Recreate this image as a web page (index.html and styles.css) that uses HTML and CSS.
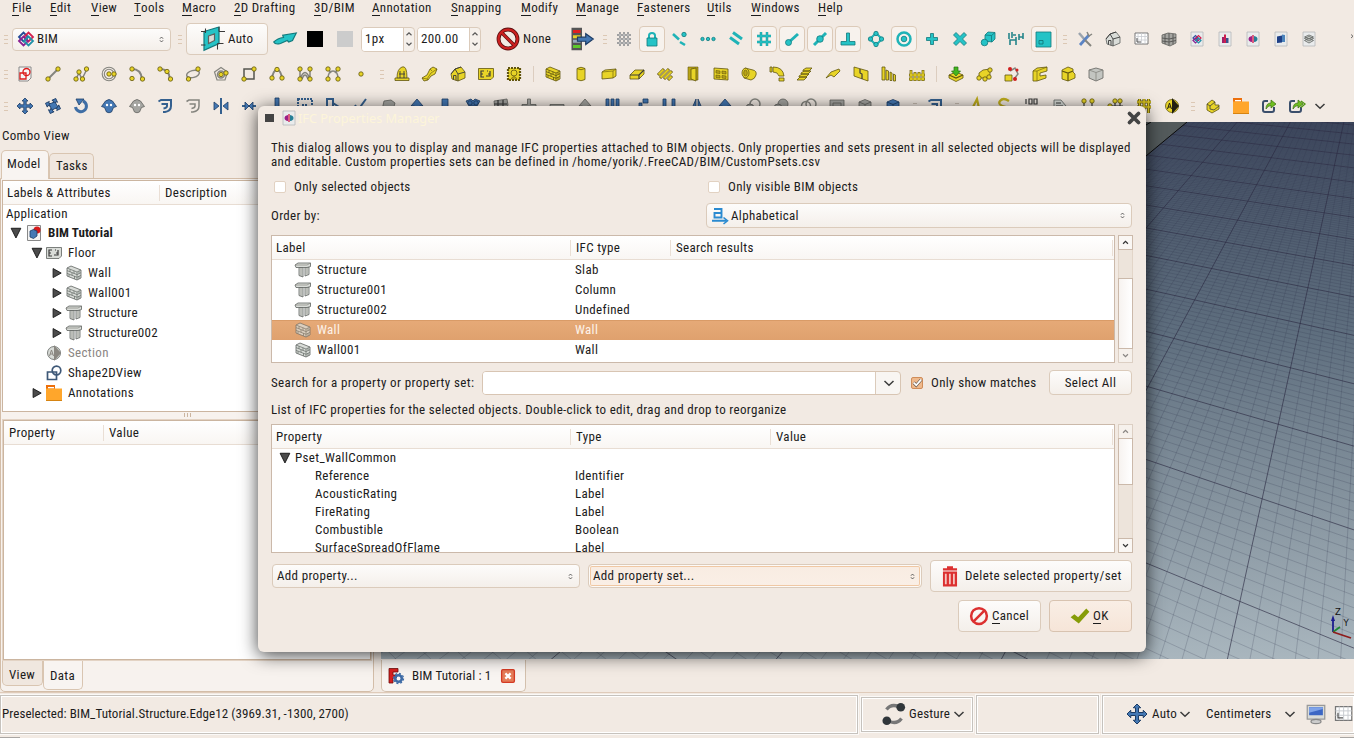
FILE: index.html
```
<!DOCTYPE html>
<html lang="en">
<head>
<meta charset="utf-8">
<title>BIM Tutorial</title>
<link rel="stylesheet" href="styles.css">
</head>
<body>
<div class="app">
  <nav class="menu">
    <span><u>F</u>ile</span><span><u>E</u>dit</span><span><u>V</u>iew</span><span><u>T</u>ools</span><span><u>M</u>acro</span><span><u>2</u>D Drafting</span><span><u>3</u>D/BIM</span><span><u>A</u>nnotation</span><span><u>S</u>napping</span><span><u>M</u>odify</span><span><u>M</u>anage</span><span><u>F</u>asteners</span><span><u>U</u>tils</span><span><u>W</u>indows</span><span><u>H</u>elp</span>
  </nav>

  <div class="bar bar-main">
    <b class="handle"></b>
    <div class="combo workbench"><i data-icon="bim"></i><span>BIM</span><i class="updown" data-icon="updown"></i></div>
    <b class="handle wide"></b>
    <div class="btn plane"><i class="s24" data-icon="plane"></i><span>Auto</span></div>
    <i class="s24 arrow3d" data-icon="arrow3d"></i>
    <b class="swatch black"></b><b class="swatch grey"></b>
    <div class="spin px"><span>1px</span><i data-icon="spin"></i></div>
    <div class="spin mm"><span>200.00</span><i data-icon="spin"></i></div>
    <i class="s24 none" data-icon="none"></i><span class="nonetext">None</span>
    <i class="s24 group" data-icon="group"></i>
    <b class="handle snap"></b>
    <div class="cells" data-cells="grid lock! near ext parallel snapgrid! endpoint! midpoint! perp! angle center! plus cross special dim wp! | tools house sheet windows doc1 doc2 doc3 doc4 doc5"></div>
    <i class="more" data-icon="more"></i>
  </div>
  <div class="bar"><b class="handle"></b><div class="cells" data-cells="sketch line wire circle arc arc3 ellipse polygon rect bspline bezcub bezier point | site building house_y floor_y space / wall column beam slab rebars door window pipe elbow stairs roof panel frame fence / imp equip nest profile compound box"></div></div>
  <div class="bar"><b class="handle"></b><div class="cells" data-cells="move copy rotate clone clone_g offset offset_g trim join split scale stretch draft2 upg_g up_b bar_b array_b array_g plus_g minus_g arrow_g bars_b path_b cols_b mirror arrow_b cut_g union_g common_g cyl_g boxg box_b - offset . text_y string_y dim100 leader axis_y axes_y grid_y section_y | part folder link links"></div><i class="chev" data-icon="chevron"></i></div>

  <main class="work">
    <aside class="dock">
      <h1>Combo View</h1>
      <div class="tabs"><span class="tab on">Model</span><span class="tab">Tasks</span></div>
      <div class="dockbody">
        <section class="tree">
          <header><span>Labels &amp; Attributes</span><span>Description</span></header>
          <div class="root">Application</div>
          <div class="node l0 bold"><i data-icon="open"></i><i data-icon="docred"></i>BIM Tutorial</div>
          <div class="node l1"><i data-icon="open"></i><i data-icon="floor"></i>Floor</div>
          <div class="node l2"><i data-icon="closed"></i><i data-icon="wall_g"></i>Wall</div>
          <div class="node l2"><i data-icon="closed"></i><i data-icon="wall_g"></i>Wall001</div>
          <div class="node l2"><i data-icon="closed"></i><i data-icon="struct"></i>Structure</div>
          <div class="node l2"><i data-icon="closed"></i><i data-icon="struct"></i>Structure002</div>
          <div class="node l1 dim"><i></i><i data-icon="section_g"></i>Section</div>
          <div class="node l1"><i></i><i data-icon="shape2d"></i>Shape2DView</div>
          <div class="node l1"><i data-icon="closed"></i><i data-icon="folder"></i>Annotations</div>
        </section>
        <div class="split"><b></b><b></b><b></b></div>
        <section class="props"><header><span>Property</span><span>Value</span></header></section>
        <div class="tabs bottom"><span class="tab">View</span><span class="tab on">Data</span></div>
      </div>
    </aside>
    <section class="mdi">
      <div class="view"><svg id="scene" viewBox="381 122 973 537" width="973" height="537"></svg></div>
      <div class="doctab"><i data-icon="freecad"></i><span>BIM Tutorial : 1</span><i class="x" data-icon="closetab"></i></div>
    </section>
  </main>

  <footer class="status">
    <div class="cell msg">Preselected: BIM_Tutorial.Structure.Edge12 (3969.31, -1300, 2700)</div>
    <div class="cell gesture"><i class="s24" data-icon="gesture"></i><span>Gesture</span><i data-icon="chevron"></i></div>
    <div class="cell"></div>
    <div class="cell units"><i class="s20" data-icon="move"></i><span>Auto</span><i data-icon="chevron"></i><span class="cm">Centimeters</span><i data-icon="chevron"></i><i class="s20 scr" data-icon="screen"></i><i class="s20" data-icon="sheet"></i></div>
  </footer>
  <b class="edge left"></b><b class="edge right"></b>
</div>

<div class="dialog">
  <div class="title"><b class="sq"></b><i data-icon="doc3"></i><span>IFC Properties Manager</span><i class="close" data-icon="close"></i></div>
  <p class="intro">This dialog allows you to display and manage IFC properties attached to BIM objects. Only properties and sets present in all selected objects will be displayed<br>and editable. Custom properties sets can be defined in /home/yorik/.FreeCAD/BIM/CustomPsets.csv</p>
  <div class="checks"><label><b class="check"></b>Only selected objects</label><label><b class="check"></b>Only visible BIM objects</label></div>
  <div class="order"><span>Order by:</span><div class="combo"><i data-icon="alpha"></i><span>Alphabetical</span><i class="updown" data-icon="updown"></i></div></div>
  <div class="listrow first">
    <div class="table">
      <header><span>Label</span><span>IFC type</span><span>Search results</span></header>
      <div class="row"><span><i data-icon="struct"></i>Structure</span><span>Slab</span></div>
      <div class="row"><span><i data-icon="struct"></i>Structure001</span><span>Column</span></div>
      <div class="row"><span><i data-icon="struct"></i>Structure002</span><span>Undefined</span></div>
      <div class="row sel"><span><i data-icon="wall_s"></i>Wall</span><span>Wall</span></div>
      <div class="row"><span><i data-icon="wall_g"></i>Wall001</span><span>Wall</span></div>
    </div>
    <div class="scroll"><i data-icon="sup"></i><b class="trough"></b><b class="thumb"></b><i class="off" data-icon="sdown"></i></div>
  </div>
  <div class="search"><span class="lbl">Search for a property or property set:</span><div class="field"><b></b><i data-icon="chevron"></i></div><label><b class="check on"><i data-icon="tick"></i></b>Only show matches</label><div class="btn">Select All</div></div>
  <div class="hint">List of IFC properties for the selected objects. Double-click to edit, drag and drop to reorganize</div>
  <div class="listrow second">
    <div class="table small">
      <header><span>Property</span><span>Type</span><span>Value</span></header>
      <div class="row set"><span><i data-icon="open"></i>Pset_WallCommon</span></div>
      <div class="row"><span>Reference</span><span>Identifier</span></div>
      <div class="row"><span>AcousticRating</span><span>Label</span></div>
      <div class="row"><span>FireRating</span><span>Label</span></div>
      <div class="row"><span>Combustible</span><span>Boolean</span></div>
      <div class="row"><span>SurfaceSpreadOfFlame</span><span>Label</span></div>
    </div>
    <div class="scroll"><i class="off" data-icon="sup"></i><b class="thumb"></b><b class="trough"></b><i data-icon="sdown"></i></div>
  </div>
  <div class="add">
    <div class="combo"><span>Add property...</span><i class="updown" data-icon="updown"></i></div>
    <div class="combo focus"><span>Add property set...</span><i class="updown" data-icon="updown"></i></div>
    <div class="btn del"><i class="s24" data-icon="trash"></i><span>Delete selected property/set</span></div>
  </div>
  <div class="actions">
    <div class="btn"><i class="s20" data-icon="cancel"></i><span><u>C</u>ancel</span></div>
    <div class="btn default"><i class="s20" data-icon="ok"></i><span><u>O</u>K</span></div>
  </div>
</div>
<script src="app.js"></script>
</body>
</html>
```

FILE: styles.css
```
* { box-sizing: border-box; }
body {
  margin: 0; width: 1354px; height: 738px; overflow: hidden; position: relative;
  background: #f2eae3; color: #1c1c1c;
  font: 13px/16px Roboto, "Open Sans", sans-serif; font-stretch: 75%; letter-spacing: .33px;
  white-space: nowrap;
}
i, b { display: block; font-style: normal; flex: none; }
i { width: 16px; height: 16px; }
i svg { display: block; width: 100%; height: 100%; overflow: visible; }
.s20 { width: 20px; height: 20px; }
.s24 { width: 24px; height: 24px; }
u { text-decoration: none; box-shadow: 0 -1px 0 #1c1c1c inset; display: inline-block; line-height: 15px; height: 16px; }

/* icon palettes */
.y { fill: #e8d427; stroke: #61550f; stroke-width: .8; }
.yd { fill: #b9a416; stroke: #61550f; stroke-width: .6; }
.t { fill: #25c3c6; stroke: #12797c; stroke-width: .8; }
.tl { fill: none; stroke: #1fb3b7; stroke-width: 2; }
.bl { fill: #4478b4; stroke: #1d3c64; stroke-width: .8; }
.bn { fill: none; stroke: #34608f; stroke-width: 2; }
.g { fill: #a5a5a1; stroke: #62625e; stroke-width: .8; }
.gn { fill: none; stroke: #85857f; stroke-width: 1.5; }
.w { fill: #d9dcd8; stroke: #5e625f; stroke-width: .8; }
.k { fill: none; stroke: #3a3a3a; stroke-width: 1.2; }

.app { display: grid; grid-template-rows: 20px 38px 32px 32px 570px 46px; height: 738px; }
.menu { display: grid; padding-left: 12px; grid-template-columns: 38px 41px 43px 48px 52px 80px 58px 79px 70px 55px 61px 70px 44px 67px 60px; }
.menu span { height: 16px; }
.bar { display: flex; align-items: center; }
.handle { width: 11px; height: 9px; background: repeating-linear-gradient(#dcc8b4 0 1px, transparent 1px 4px) 4px 0 / 4px 9px no-repeat; }
.cells { display: flex; align-items: center; }
.cell16 { width: 28px; height: 28px; padding: 6px; }
.cell16.on { width: 26px; height: 26px; margin: 0 1px; padding: 4px; border: 1px solid #dccab8; border-radius: 4px; background: #f7f2ed; }
.gap { width: 12.5px; height: 9px; background: repeating-linear-gradient(#dcc8b4 0 1px, transparent 1px 4px) 5px 0 / 4px 9px no-repeat; }
.sep { width: 11px; height: 16px; background: linear-gradient(#dccdbf, #dccdbf) 5px 0 / 1px 16px no-repeat; }
.dash { width: 13.5px; height: 6px; background: linear-gradient(#c9bdb2, #c9bdb2) 6px 0 / 4px 1px no-repeat; }

.combo, .btn { display: flex; align-items: center; border: 1px solid #dbcbbb; border-radius: 4px; background: linear-gradient(#fdfcfb, #f4efea); }
.combo .updown { margin-left: auto; width: 5px; height: 7px; }
.workbench { width: 159px; height: 23px; margin-left: 1px; padding: 0 6px 0 5px; gap: 3px; }
.wide { margin-left: 3px; }
.plane { width: 82px; height: 32px; margin-left: 1px; padding-left: 14px; gap: 3px; }
.arrow3d { margin-left: 5px; }
.swatch { width: 16px; height: 16px; margin-left: 10px; }
.swatch.grey { margin-left: 14px; }
.black { background: #000; }
.swatch.grey { background: #ccc; }
.spin { display: flex; height: 25px; border: 1px solid #dbcbbb; border-radius: 4px; background: #f5f0eb; margin-left: 8px; }
.spin span { background: #fff; border-right: 1px solid #dbcbbb; border-radius: 3px 0 0 3px; padding: 3px 0 0 3px; flex: 1; }
.spin i { width: 10px; height: 22px; }
.px { width: 54px; }
.mm { width: 64px; margin-left: 2px; }
.none { margin-left: 15px; }
.nonetext { width: 47px; margin-left: 3px; }
.handle.snap { margin-left: 5px; }
.more { margin: 0 -2px 6px auto; width: 8px; }
.chev { margin-left: 1px; }

.work { display: grid; grid-template-columns: 375px 973px; column-gap: 6px; }
.dock h1 { margin: 0; font: inherit; padding: 6px 0 0 2px; height: 28px; }
.tabs { display: flex; align-items: flex-end; padding-left: 1px; height: 28px; }
.tab { border: 1px solid #d9c5b1; border-bottom: 0; border-radius: 5px 5px 0 0; padding: 4px 6px 0; height: 25px; width: 45px; background: #f0e7df; }
.tab.on { height: 29px; width: 48px; padding: 5px 5px 0; background: #f8f4f1; margin-bottom: -1px; position: relative; }
.dockbody { height: 514px; border: 1px solid #d3bda8; border-radius: 0 0 5px 5px; background: #f7f2ee; padding: 1px 1px 0; margin-right: 1px; }
.tree { background: #fff; border: 1px solid #cbb5a0; height: 232px; }
.tree header, .props header, .table header { display: grid; height: 24px; align-items: center; background: linear-gradient(#fff, #f9f6f3); border-bottom: 1px solid #e8ddd3; }
.tree header { grid-template-columns: 152px 1fr; padding-left: 4px; }
header span + span { border-left: 1px solid #eadfd5; padding-left: 5px; }
.root { padding-left: 3px; line-height: 18px; height: 18px; }
.node { display: flex; align-items: center; height: 20px; gap: 4px; }
.node i:first-child { width: 12px; height: 14px; }
.l0 { padding-left: 7px; }
.l1 { padding-left: 27.5px; gap: 3px; }
.l2 { padding-left: 47.5px; gap: 3px; }
.l0 i + i { margin-right: 2px; }
.l1 i + i, .l2 i + i { margin: 0 3px 0 .5px; }
.bold { font-weight: bold; letter-spacing: .1px; }
.dim { color: #8b8683; }
.split { height: 7px; display: flex; justify-content: center; gap: 2px; padding-top: 1px; }
.split b { width: 1px; height: 4px; background: #cbb5a0; }
.props { background: #fff; border: 1px solid #cbb5a0; outline: 1px solid #e3d3c4; height: 240px; margin: 1px 1px 0; }
.props header { grid-template-columns: 94px 1fr; padding-left: 5px; }
.bottom { align-items: flex-start; height: 30px; margin-top: 1px; padding: 0; }
.bottom .tab { border: 1px solid #d9c5b1; border-top: 0; border-radius: 0 0 5px 5px; height: 25px; width: 41px; padding: 6px 6px; }
.bottom .tab.on { height: 29px; width: 40px; padding: 7px 6px; margin: 0; }
.view { height: 537px; background: linear-gradient(#414c61, #5f6f7f 40%, #8795a0 72%, #a9b6be); overflow: hidden; }
#scene { display: block; letter-spacing: 0; font-family: "DejaVu Sans", sans-serif; }
.doctab { display: flex; align-items: center; width: 145px; height: 32px; border: 1px solid #d3c0ad; border-top: 0; border-radius: 0 0 5px 5px; background: #f8f4f1; padding-left: 6px; margin-top: 1px; letter-spacing: .13px; }
.doctab span { margin-left: 8px; width: 89px; }
.doctab .x { width: 14px; height: 14px; }

.status { display: grid; grid-template-columns: 858px 112px 123px 253px; column-gap: 3px; border-top: 1px solid #dfcbba; padding-top: 1px; height: 42px; align-items: center; }
.cell { display: flex; align-items: center; height: 39px; border: 1px solid #c6c2bd; box-shadow: 0 0 0 1px #fff inset, 0 0 0 1px #fbf9f7; padding-left: 1px; }
.msg { letter-spacing: .08px; }
.gesture { height: 35px; padding-left: 20px; gap: 3px; }
.gesture span { margin-right: -2px; letter-spacing: .2px; }
.units { padding-left: 24px; letter-spacing: .3px; }
.units span { margin-left: 5px; width: 25px; }
.units .cm { width: 70px; margin: 0 6px 0 13px; }
.units .scr { margin: 0 7px 0 8px; }
.edge { position: absolute; height: 1px; bottom: 0; background: #a9a6a3; }
.edge.left { left: 0; width: 20px; }
.edge.right { right: 0; width: 14px; }

.dialog { position: absolute; left: 258px; top: 106px; width: 888px; height: 546px; padding: 4px 14px 0 13px; background: #f2eae3; border-radius: 6px; box-shadow: 0 3px 18px rgba(0, 0, 0, .75); }
.title { display: flex; align-items: center; height: 16px; margin: 0 -10px 0 -6px; font: 12.75px/16px "Noto Sans", sans-serif; letter-spacing: 0; color: #fdf5da; }
.sq { width: 9px; height: 8px; background: #444; margin-right: 7px; }
.title span { margin-left: 1px; }
.close { margin-left: auto; }
.intro { margin: 15px 0 0; height: 33px; line-height: 14px; }
.checks { display: grid; grid-template-columns: 434px 1fr; height: 26px; }
label { display: flex; align-items: center; height: 26px; gap: 8px; }
.checks label { padding-left: 3px; }
.check { width: 12px; height: 12px; border: 1px solid #e2d2c2; border-radius: 2px; background: #fff; }
.order { display: grid; grid-template-columns: 435px 426px; height: 35px; padding-top: 3px; }
.order .combo { height: 25px; padding: 0 6px 0 5px; gap: 3px; }
.order > span { padding-top: 5px; }
.listrow { display: flex; gap: 3px; }
.listrow > div { flex: none; }
.first { height: 128px; }
.second { height: 129px; }
.table { width: 844px; background: #fff; border: 1px solid #cbb9aa; overflow: hidden; }
.table header { grid-template-columns: 294px 100px 442px 1fr; padding-left: 4px; }
.table header::after { content: ""; border-left: 1px solid #eadfd5; height: 16px; }
.table.small header { grid-template-columns: 294px 200px 342px 1fr; }
.row { display: grid; grid-template-columns: 303px 1fr; height: 20px; align-items: center; }
.row span:first-child { display: flex; align-items: center; gap: 6px; padding-left: 23px; }
.row.sel { background: linear-gradient(#e6aa78, #dfa16e); color: #fdf3ea; box-shadow: 0 1px 0 #d99b67 inset; }
.small .row { height: 18px; }
.small .row span:first-child { padding-left: 43px; }
.small .row.set span:first-child { padding-left: 7px; gap: 4px; }
.set i { width: 12px; height: 14px; }
.scroll { width: 15px; display: flex; flex-direction: column; }
.scroll i { height: 15px; width: 15px; border: 1px solid #cbb9aa; background: #faf7f4; }
.scroll i.off { opacity: .55; }
.trough { flex: 1; background: #ede4db; border: 1px solid #e2d5c8; border-width: 0 1px; }
.thumb { position: relative; height: 71px; background: linear-gradient(90deg, #f7f3f0, #fff); border: 1px solid #cbb9aa; margin: -1px 0; }
.second .thumb { height: 47px; }
.search { display: flex; align-items: center; height: 39px; }
.lbl { width: 211px; letter-spacing: .38px; }
.field { width: 419px; height: 24px; display: flex; border: 1px solid #d8c5b3; border-radius: 4px; background: #f8f5f2; align-items: center; }
.field b { width: 393px; height: 22px; background: #fff; border-right: 1px solid #dbcbbb; border-radius: 3px 0 0 3px; }
.field i { margin-left: 5px; }
.search label { margin-left: 10px; width: 138px; }
.check.on { background: #efb98c; border-color: #d08d5a; }
.check.on i { width: 12px; height: 12px; margin: -1px; }
.search .btn { width: 83px; height: 25px; justify-content: center; }
.hint { height: 22px; }
.add { display: flex; margin-top: 7px; height: 32px; align-items: center; padding-left: 1px; gap: 8px; }
.add .combo { width: 308px; height: 24px; padding: 0 6px 0 4px; }
.add .combo.focus { width: 334px; background: linear-gradient(#f8ece2, #faefe6); box-shadow: 0 0 0 1px #fdfaf7 inset, 0 0 0 2px #f0c8a4 inset; }
.del { width: 202px; height: 32px; padding-left: 7px; gap: 3px; letter-spacing: .4px; }
.actions { display: flex; justify-content: flex-end; gap: 8px; margin-top: 8px; }
.actions .btn { width: 83px; height: 32px; padding-left: 10px; gap: 3px; }
.actions .default { background: linear-gradient(#f9eee5, #f6e5d8); border-color: #d8c3b0; padding-left: 20px; }
```

FILE: app.js
```
const dot = (x, y, c = 'y') => `<circle class="${c}" cx="${x}" cy="${y}" r="2.2"/>`;
const P = (d, c, x = '') => `<path class="${c}" d="${d}" ${x}/>`;
const page = s => `<path d="M2 1H14V15H2Z" fill="#e9ebec" stroke="#b5b8ba" stroke-width=".8"/>${s}`;
const bricks = (c, k) => P('M1 3 5 1 15 5V13L11 15 1 11Z', c) + P('M1 5.6 11 9.6 15 7.6M1 8.3 11 12.3 15 10.3M1 3 11 7 15 5M11 7V15M4 4.3V7M8 5.8V8.5M6 7.6V10.3M3 9.2V11.6M8.5 11V14M13 6V8.5M13 11V14', 'k', `style="stroke-width:.8;stroke:${k}"`);
const cube = c => P('M2 4 8 1.5 14 4V12L8 15 2 12Z', c) + P('M2 4 8 6.5 14 4M8 6.5V15', c, 'style="fill:none"');
const houses = c => P('M1 8 5 3 11 1 15 6V12L8 15 2 13Z', c) + P('M1 8 5 3 8 8V15M5 3 11 1M8 8 15 6M3.5 13.5V9.5H6V14.4', 'k', 'style="stroke-width:.9"');
const floor = c => P('M.5 2.5H15.5V11L13 13.5H.5Z', c) + P('M6 5H3V11H6M3 8H5M8 10H12V5M9 5H10M12 8H10', 'k');
const move = c => P('M8 0 11 3H9.2V6.8H13V5L16 8 13 11V9.2H9.2V13H11L8 16 5 13H6.8V9.2H3V11L0 8 3 5V6.8H6.8V3H5Z', c);
const sheep = c => P('M4.500 3Q8 0 11.500 3L15.500 8.500 12.500 9.500 10.500 14Q8 15.500 5.500 14L3.500 9.500 .5 8.500Z', c) + '<circle cx="6" cy="7" r="1.2" fill="#fff"/><circle cx="10" cy="7" r="1.2" fill="#fff"/>';
const off = c => P('M1.500 3.500 4 2H14V8Q14 13 8 14H6M4.500 6H10V8Q10 10 6.500 10.500', c);
const arr = c => P('M8 1 14 8H10.500V15H5.500V8H2Z', c);
const col3 = (c, xs) => xs.map(x => P(`M${x} 1H${x + 3}V15H${x}Z`, c)).join('');
const gridLines = 'M1 4H15M1 9H15M3.500 1V12M8 1V15M12.500 1V15';
const sect = (c, f) => `<circle class="${c}" cx="8" cy="8" r="6.500"/><path d="M8 0V16L15 8Z" fill="${f}"/><path d="M3.500 11 5.500 5 7.500 11M4 9H7" fill="none" stroke="${f}"/>`;

const icons = {
  bim: '<g fill="none" stroke-width="1.800"><path d="M1 6 5.500 1.500 10 6 5.500 10.500Z" stroke="#244b97"/><path d="M6 6 10.500 1.500 15 6 10.500 10.500Z" stroke="#d4214f"/><path d="M1 10 5.500 5.500 10 10 5.500 14.500Z" stroke="#8b2191"/><path d="M6 10 10.500 5.500 15 10 10.500 14.500Z" stroke="#2191a8"/></g>',
  updown: '<path d="M3 5.500 8 0 13 5.500M3 10.500 8 16 13 10.500" fill="none" stroke="#444" stroke-width="2.600"/>',
  plane: P('M2 3 12 0V11L2 15.500Z', 't') + P('M0 3H3M12 3H16M0 12H3M11 11H15M3 1V4M12 0V3M11 11V15', 'k', 'style="stroke-width:.7"') + P('M5 6 9 4.600V9L5 11Z', 'w'),
  arrow3d: P('M.5 10Q3 7.500 7 7L6.500 5.500 15.500 4 13 9 10.500 10 9.500 9 5 11Q1.500 12 .5 10Z', 't'),
  spin: '<g fill="none" stroke="#555" stroke-width="1.800"><path d="M4 2 8-2 12 2M4 14 8 18 12 14"/></g>',
  none: '<circle cx="8" cy="8" r="6.300" fill="none" stroke="#5b1010" stroke-width="2.600"/><path d="M3.500 3.500 12.500 12.500" stroke="#5b1010" stroke-width="2.400"/><g fill="none" stroke="#cc2020" stroke-width="1.500"><circle cx="8" cy="8" r="6.300"/><path d="M3.500 3.500 12.500 12.500"/></g>',
  group: '<path d="M1 .5H8V15.500H1Z" fill="#555"/><path d="M2 2H7V4H2Z" fill="#e01f1f"/><path d="M2 5.500H7V7.500H2Z" fill="#e6d227"/><path d="M2 8.500H7V10.500H2Z" fill="#9ab"/><path d="M2 12H7V14H2Z" fill="#5ec92c"/>' + P('M5 6.800H10.500V4.500L15.500 8 10.500 11.700V9.500H5Z', 'bl'),
  grid: '<path d="M1 4H15M1 8H15M1 12H15M4 1V15M8 1V15M12 1V15" stroke="#77787a" stroke-width="2"/><path d="M1 4H15M1 8H15M1 12H15M4 1V15M8 1V15M12 1V15" stroke="#dfe0e0" stroke-width=".8"/>',
  lock: P('M5 7V4.500Q5 2 8 2T11 4.500V7', 'tl') + P('M3 7H13V15H3Z', 't'),
  near: dot(12, 3.5, 't') + P('M1 3 7 8.500M8 11 13 14', 'tl', 'style="stroke-width:2.600"'),
  ext: [2.5, 8, 13.5].map(x => `<circle class="t" cx="${x}" cy="8" r="1.700"/>`).join(''),
  parallel: P('M5 1.500 14 8M2 6.500 11 13', 'tl', 'style="stroke-width:3"'),
  snapgrid: P('M5 1V15M11 1V15M1 5H15M1 11H15', 'tl', 'style="stroke:#178a8e;stroke-width:2.400"') + P('M5 1V15M11 1V15M1 5H15M1 11H15', 'tl', 'style="stroke-width:1.400;stroke:#25c3c6"'),
  endpoint: P('M4 12 14 3', 'tl', 'style="stroke-width:3"') + '<circle class="t" cx="4.500" cy="11.500" r="3"/>',
  midpoint: P('M2 14 14 2', 'tl', 'style="stroke-width:3"') + '<circle class="t" cx="8" cy="8" r="3.300"/>',
  perp: P('M6.500 2H9.500V10.500H15V14H1V10.500H6.500Z', 't'),
  angle: P('M8 2 14 8 8 14 2 8Z', 'tl') + dot(8, 2.5, 't') + dot(13.5, 8, 't') + dot(8, 13.5, 't') + dot(2.5, 8, 't'),
  center: '<circle class="tl" cx="8" cy="8" r="6.500" style="stroke-width:2.500"/><circle class="t" cx="8" cy="8" r="2.800"/>',
  plus: P('M6.500 2.500H9.500V6.500H13.500V9.500H9.500V13.500H6.500V9.500H2.500V6.500H6.500Z', 't'),
  cross: P('M4 1.500 8 5.500 12 1.500 14.500 4 10.500 8 14.500 12 12 14.500 8 10.500 4 14.500 1.500 12 5.500 8 1.500 4Z', 't'),
  special: P('M5 4 8 1 15 1.500V8L12 11 5 10Z', 't') + P('M5 4 11.500 4.500 15 1.500M11.500 4.500V11', 't', 'style="fill:none"') + '<circle class="t" cx="4.500" cy="11.500" r="3.300"/>',
  dim: P('M1 2V8M4 1V7M5 4H8M2 14V9H8M8 6V14M11 3V9M15 2V8M11 6H15', 'tl', 'style="stroke-width:1.600;stroke:#25858a"'),
  wp: P('M0 1H15V16H0Z', 't') + P('M3 9.500H7V13H3Z', 'k', 'style="stroke:#12797c;stroke-width:.9"'),
  tools: P('M2 2 8 9', 'gn', 'style="stroke-width:2.500;stroke:#9aa3ad"') + P('M12 4 3 14', 'bn', 'style="stroke:#5b84c4;stroke-width:2.800"') + P('M8 9 14 15', 'gn', 'style="stroke-width:2"') + P('M10 1 12 5 15 3', 'gn'),
  house: houses('w'), house_y: houses('y'),
  sheet: '<path d="M2 2H15V13H2Z" fill="#fff" stroke="#777"/><path d="M5 2V13M8.500 2V13M12 2V13M2 5.500H15M2 9H15" stroke="#c9ccd0" stroke-width=".8"/><path d="M4 7V11H8" fill="none" stroke="#555"/>',
  windows: P('M1 4 7 2 15 3V12L9 15 1 12Z', 'g') + P('M4 3V13M8 2V14.500M12 3V13.500M1 7 8 8 15 6.500M1 10 8 11 15 9.500', 'k', 'style="stroke:#5a5a58;stroke-width:1"'),
  doc1: page('<g fill="none" stroke-width="1.200"><path d="M4 7 6.500 4.500 9 7 6.500 9.500Z" stroke="#34519f"/><path d="M7 7 9.500 4.500 12 7 9.500 9.500Z" stroke="#d4214f"/><path d="M4 9.500 6.500 7 9 9.500 6.500 12Z" stroke="#8b2191"/><path d="M7 9.500 9.500 7 12 9.500 9.500 12Z" stroke="#2191a8"/></g>'),
  doc2: page('<path d="M5 6H7V12H5Z" fill="#a02068"/><path d="M7 3.500H9V12H7Z" fill="#cc1f4f"/><path d="M9 7H11.500V12H9Z" fill="#39518d"/>'),
  doc3: page('<path d="M7 5V11Q3.500 10.500 3.500 8T7 5Z" fill="#9c1d86"/><path d="M9 5V11Q12.500 10.500 12.500 8T9 5Z" fill="#267f96"/><path d="M7.300 4H8.700V12H7.300Z" fill="#d4214f"/>'),
  doc4: page('<path d="M4 5.500 9 4.500V11.500L4 12Z" fill="#1e3f86"/><path d="M9 3.500 12 4V11H9Z" fill="#4b83bb"/>'),
  doc5: page(P('M3.500 9.500 8 7.500 12.500 9.500 8 12ZM3.500 7.500 8 5.500 12.500 7.500 8 10ZM3.500 6 8 4 12.500 6 8 8Z', 'w')),
  more: '<path d="M4 5 8 8.500 4 12" fill="none" stroke="#444" stroke-width="1.500"/>',
  sketch: '<path d="M2 1H14V12L11 15H2Z" fill="#f6f6f6" stroke="#888"/><g fill="none" stroke="#dc1c1c" stroke-width="1.300"><circle cx="9.500" cy="6" r="3.500"/><path d="M3 7H9V13H3Z"/></g>',
  line: P('M3 13 13 3', 'gn', 'style="stroke-width:2"') + dot(3, 13) + dot(13, 3),
  wire: P('M3 13 6 7 9 13 14 3', 'gn') + dot(3, 13) + dot(6, 6) + dot(9.5, 13) + dot(13.5, 3),
  circle: '<circle class="gn" cx="8" cy="8" r="6.800" style="stroke-width:1.100"/><circle class="gn" cx="8" cy="8" r="4.700" style="stroke-width:1.100"/>' + dot(8, 8) + dot(13, 8),
  arc: P('M3 3Q12 3 13 13', 'gn', 'style="stroke-width:2"') + dot(3, 3) + dot(3, 12.5) + dot(13.5, 13),
  arc3: P('M3 3Q12 3 13 13', 'gn', 'style="stroke-width:2"') + dot(3, 3) + dot(10, 5.5) + dot(13.5, 13),
  ellipse: '<ellipse class="gn" cx="8" cy="8" rx="6.500" ry="3.500" transform="rotate(-15 8 8)"/>' + dot(3.500, 13) + dot(13, 3),
  polygon: P('M8 1.500 14.500 6 12 14H4L1.500 6Z', 'gn', 'style="stroke-width:1.200"') + '<circle class="gn" cx="8" cy="8.500" r="3.500"/>' + dot(8, 8.5) + dot(13, 7),
  rect: P('M3 3H13V13H3Z', 'gn', 'style="stroke:#55554f"') + dot(3, 13) + dot(13, 3),
  bspline: P('M3 13Q4 4 8 4T13 13', 'gn', 'style="stroke-width:2"') + dot(3, 12) + dot(8, 3.5) + dot(13, 12),
  bezcub: P('M3 13V3H5M13 13V3H11M3 13Q8 0 13 13M5 13Q8 5 11 13', 'gn') + dot(3, 13) + dot(13, 13) + dot(3, 3) + dot(13, 3),
  bezier: P('M3 13Q3 5 8 5T13 13M3 3 6 7M13 3 10 7', 'gn') + dot(3, 13) + dot(13, 13) + dot(3, 3) + dot(13, 3),
  point: dot(8, 8),
  site: P('M3 12Q3 3 8 1T13 12H15V14.500H1V12Z', 'y') + P('M6 12V5M10 12V5M3 12H13M5 8H11', 'k', 'style="stroke-width:.9"'),
  building: P('M0 12 5 9 8 3 11 1 15 3 13 8 9 10 6 14 2 15Z', 'y') + P('M0 12 5 13 9 7 15 3M5 13 6 14M8 3 10 5', 'yd', 'style="fill:none"'),
  floor_y: floor('y'), floor: floor('w'),
  space: P('M2 2H14V14H2Z', 'y', 'style="stroke-dasharray:2 1;stroke-width:2.200"') + '<circle class="y" cx="8" cy="7" r="3"/>' + P('M5 13Q8 8 11 13', 'yd'),
  wall: bricks('y', '#61550f'), wall_g: bricks('w', '#707672'), wall_s: `<g opacity=".75">${bricks('w', '#707672')}</g>`,
  column: P('M4 2.500Q8 0 12 2.500V13.500Q8 16 4 13.500Z', 'y') + P('M4 2.500Q8 5 12 2.500', 'y'),
  beam: P('M1 6 4 4 15 3V10L12 12 1 13Z', 'y') + P('M1 6 12 5 15 3M12 5V12', 'yd', 'style="fill:none"'),
  slab: P('M1 9 6 4H15V8L10 13H1Z', 'y') + P('M1 9H10L15 4M10 9V13', 'k'),
  rebars: P('M1 9 7 3M3 12 12 3M7 13 15 5M11 14 15 10', 'yd', 'style="stroke:#61550f;stroke-width:3"') + P('M1.500 8.500 6.500 3.500M3.500 11.500 11.500 3.500M7.500 12.500 14.500 5.500M11.500 13.500 14.500 10.500', 'yd', 'style="stroke:#e2ce25;stroke-width:1.800"'),
  door: P('M3 1H13V14H3Z', 'yd') + P('M6 3 11 2V15L6 13Z', 'y'),
  window: P('M1 2 15 3V14L1 13Z', 'y') + P('M3 4.500 7 5V7.500L3 7ZM9 5 13 5.500V8L9 7.500ZM3 9 7 9.500V12L3 11.500ZM9 9.500 13 10V12.500L9 12Z', 'yd'),
  pipe: P('M4 2 12 4Q16 5 15 9T10 14L3 12Z', 'y') + '<ellipse class="y" cx="4.500" cy="7" rx="3.500" ry="4.800"/><ellipse class="yd" cx="4.500" cy="7" rx="1.800" ry="3"/>',
  elbow: P('M4 1Q14 1 15 10H10Q9 6 4 6ZM1 1H3V6H1ZM10 12H15V15H10Z', 'y'),
  stairs: P('M6 4 9 2H15L12 5H6ZM4 7 7 5H14L11 8H4ZM2 10 5 8H12L9 11H2ZM0 14 3 11H10L7 14Z', 'y'),
  roof: P('M1 12 6 6 14 3 15 5 9 11 6 9Z', 'y'),
  panel: P('M1 1 15 5V15L1 10Z', 'y') + P('M7 3V7L9 8V13', 'k'),
  frame: P('M1 1H4V14H1ZM5 4 7.500 5V14H5ZM9 6 11 7V14.500H9ZM12.500 8 14.500 9V15H12.500Z', 'y'),
  fence: P('M2 4V15M6 6V15M10 6V15M14 4V15M0 9H16M0 13H16', 'k', 'style="stroke:#61550f;stroke-width:2.700"') + P('M2 4.500V14.500M6 6.500V14.500M10 6.500V14.500M14 4.500V14.500M.5 9H15.500M.5 13H15.500', 'k', 'style="stroke:#e2ce25;stroke-width:1.500"'),
  imp: P('M1 9 8 6 15 9V12L8 15.500 1 12Z', 'y') + P('M1 9 8 12 15 9', 'k', 'style="stroke:#61550f"') + '<path d="M6 1H10V5H12.500L8 10 3.500 5H6Z" fill="#43b51f" stroke="#267010" stroke-width=".7"/>',
  equip: P('M3 7 7 4 14 3V9L10 12H3Z', 'y') + dot(3, 12) + dot(9, 13) + dot(14, 4) + dot(13, 11),
  nest: P('M1 9H8V15H1Z', 'y') + P('M6 5 11 2 14 8 10 13', 'gn') + '<g fill="#d01f1f"><circle cx="6" cy="3" r="2"/><circle cx="13" cy="4" r="1.500"/><circle cx="11" cy="13" r="2"/></g>',
  profile: P('M1 5 5 2 15 1V5L8 7V10L14 9V12L5 15H1Z', 'y') + P('M1 5H5L15 1M5 5V15', 'yd', 'style="fill:none"'),
  compound: P('M2 4 8 1 13 3V6L15 8V12L8 15 2 13Z', 'y') + P('M2 5 8 7 13 5M8 7V15', 'k', 'style="stroke:#61550f"'),
  box: P('M1 4 8 2 15 4V12L8 15 1 12Z', 'g', 'style="fill:#c3c5c1"') + P('M1 4 8 6.500 15 4M8 6.500V15', 'gn', 'style="stroke-width:.8"'),
  boxg: cube('g'), box_b: cube('bl'),
  move: move('bl'), copy: `<g transform="rotate(20 8 8)">${move('bl')}</g>` + P('M4 6 10 4 13 9 7 12Z', 'bl'),
  rotate: P('M10 3A5.500 5.500 0 1 1 2.500 9', 'bn', 'style="stroke-width:3;stroke:#3f6ea5"') + P('M3 1 11 1 6 7Z', 'bl'),
  clone: sheep('bl'), clone_g: sheep('g'), offset: off('bn'), offset_g: off('gn'),
  trim: P('M8 0V16', 'bn') + P('M1 4 6 8 1 12ZM15 4 10 8 15 12Z', 'bl'),
  join: P('M1 8H15', 'bn') + P('M4 4 8 8 4 12ZM12 4 8 8 12 12Z', 'bl'),
  split: P('M1 10H15', 'bn') + P('M6 0H10V14H6Z', 'bl'),
  scale: P('M1 1H15V15H1ZM5 7H10V14', 'bn', 'style="stroke-dasharray:2 1"'),
  stretch: P('M2 1H8V15H2ZM8 5 14 9V15', 'bn'),
  draft2: P('M2 7 5 12 13 1', 'bn'),
  upg_g: P('M3 3 10 2 14 5 12 12H1Z', 'g'), up_b: arr('bl'), bar_b: P('M5 1H11V15H5Z', 'bl'),
  array_b: P('M1 3 6 1 8 3 10 1 15 3 12 8H4Z', 'bl') + dot(5, 5, 'bl') + dot(11, 5, 'bl'),
  array_g: P('M1 3 14 1 15 7 12 12H2Z', 'g') + P('M1 6H14M5 2V12M10 2V12', 'k'),
  plus_g: P('M6.500 1H9.500V6.500H15V9.500H9.500V15H6.500V9.500H1V6.500H6.500Z', 'g'), minus_g: P('M1 6.500H15V9.500H1Z', 'g'),
  arrow_g: arr('g'), bars_b: col3('bl', [1, 6, 11]), path_b: P('M10 1H15V5H10ZM6 5H9V9H6ZM2 9H6V13H2Z', 'bl'), cols_b: col3('bl', [2, 11]),
  mirror: P('M7 1V15H1ZM9 1V15H15Z', 'bl'), arrow_b: arr('bl'),
  cut_g: '<circle class="gn" cx="10" cy="6" r="5"/><circle class="g" cx="5" cy="10" r="4"/>',
  union_g: '<circle class="g" cx="10" cy="6" r="5"/><circle class="g" cx="5" cy="10" r="4"/>',
  common_g: '<circle class="gn" cx="10" cy="6" r="5"/><circle class="gn" cx="5" cy="8" r="4.500"/>',
  cyl_g: P('M1 2H15V14H1ZM4 5H12V14H4Z', 'g'),
  text_y: P('M2 15 9 1 12 15M5 10H11', 'yd', 'style="fill:none;stroke:#c1ae1c;stroke-width:2.200"'),
  string_y: P('M13 3Q7-1 4 3T10 9 4 14', 'yd', 'style="fill:none;stroke:#c1ae1c;stroke-width:2.200"'),
  dim100: P('M2 1V6M5 1H8V6H5ZM10 1H13V6H10ZM1 10H15', 'k'), leader: P('M2 2H9L14 8V15H2Z', 'w') + P('M4 5H9M4 8H11', 'k'),
  axis_y: P('M4 4V15M12 4V15', 'k') + dot(4, 3) + dot(12, 3), axes_y: dot(7, 3) + dot(12, 3) + dot(2, 8) + P('M7 5V15M12 5V15M4 8H15', 'k'),
  grid_y: P(gridLines, 'k', 'style="stroke:#61550f;stroke-width:3"') + P(gridLines, 'k', 'style="stroke:#d9c522;stroke-width:1.500"'),
  section_y: sect('y', '#222011'), section_g: sect('w', '#8a8781'),
  part: P('M2 6 7 2 10 4V7L14 7V11L7 15 2 12Z', 'y') + P('M2 6 5 8V11L9 12 14 8M5 8 10 4', 'k', 'style="stroke-width:.8"'),
  folder: '<path d="M0 0H9V5H0Z" fill="#ec6f0c"/><path d="M2 2H8V3.500H2Z" fill="#fff"/><path d="M0 3.500H16V15.500H0Z" fill="#ffa62b"/><path d="M0 15H16V16H0Z" fill="#d68412"/>',
  link: P('M7 3H4Q2 3 2 5V12Q2 14 4 14H11Q13 14 13 12V9', 'bn', 'style="stroke:#3b4f6c"') + '<path d="M5 11Q5 5 10 5V2L15 6 10 10V7.500Q7 7.500 5 11Z" fill="#6fbd20" stroke="#386c0b" stroke-width=".7"/>',
  chevron: '<path d="M3.500 6 8 10.300 12.500 6" fill="none" stroke="#3c3c3c" stroke-width="1.500"/>',
  open: '<path d="M3 3H13.500L8.250 13.500Z" fill="#4b4b4b" stroke="#161616" transform="translate(-2.200 -2) scale(1.230)"/>',
  closed: '<path d="M4 3V13L13 8Z" fill="#4b4b4b" stroke="#161616" transform="translate(-2 -1.500) scale(1.200)"/>',
  docred: '<path d="M1.500 .5H14.500V15.500H1.500Z" fill="#f3f3f3" stroke="#888"/><circle cx="11" cy="5" r="3.500" fill="#d61a1a"/>' + P('M4 6 7.500 4.500 11 6V11L7.500 13.500 4 12Z', 'bl'),
  struct: P('M4 5.500H8V15L4 13.500ZM10 5H14V12.500L10 14Z', 'w') + P('M6 6V14M12 6V12.500', 'gn', 'style="stroke-width:.7"') + P('M0 3 3 1 15.500 1V4.500L12 5.500 1 5.500Z', 'w') + P('M0 3H12L15.500 1', 'gn', 'style="stroke-width:.7"'),
  shape2d: '<g fill="none" stroke="#3e5877" stroke-width="1.700"><circle cx="10.500" cy="5.500" r="4.300"/><path d="M1.500 7H10.500V14.500H1.500Z"/></g>',
  freecad: '<path d="M1 .5H10V4H5V7H8.500V10H5V15H1Z" fill="#d6201f" stroke="#6d0c0c" stroke-width=".8"/><circle cx="10.500" cy="10.500" r="3.300" fill="none" stroke="#3e6ba6" stroke-width="2.600"/><circle cx="10.500" cy="10.500" r="5" fill="none" stroke="#3e6ba6" stroke-width="1.300" stroke-dasharray="2 1.900"/>',
  closetab: '<rect x=".7" y=".7" width="14.600" height="14.600" rx="1.500" fill="#e57c58" stroke="#d43a24" stroke-width="1.500"/><path d="M5 5 11 11M11 5 5 11" stroke="#fff" stroke-width="2.500"/>',
  gesture: '<g fill="none" stroke="#777" stroke-width="2.200"><path d="M3 5Q6 1 11 3M13 11Q10 15 5 13"/></g><circle cx="12.500" cy="3.500" r="2.900" fill="#30363a"/><circle cx="3.200" cy="12.500" r="2.900" fill="#30363a"/>',
  screen: '<path d="M1 1H15V12H1Z" fill="#d9dbd8" stroke="#999"/><path d="M2.500 2.500H13.500V9H2.500Z" fill="#3c66c4"/><path d="M2.500 7 13.500 4V2.500H2.500Z" fill="#7fa3e8"/><ellipse cx="8" cy="14" rx="4" ry="1.700" fill="#ccc" stroke="#888"/>',
  close: '<path d="M3.500 3.500 12.500 12.500M12.500 3.500 3.500 12.500" stroke="#444" stroke-width="3.800" stroke-linecap="round"/>',
  alpha: '<g fill="none" stroke="#2a8ad0" stroke-width="1.900"><path d="M2 1H9.500V9.500H2.500V5H9.500M0 12.800H14"/></g><path d="M11.500 9.500 15.500 12.800 11.500 16" fill="none" stroke="#2a8ad0" stroke-width="1.600"/>',
  sup: '<path d="M5 9.500 8 6.500 11 9.500" fill="none" stroke="#333" stroke-width="1.500"/>',
  sdown: '<path d="M5 6.500 8 9.500 11 6.500" fill="none" stroke="#333" stroke-width="1.500"/>',
  tick: '<path d="M3.500 7.500 7 11 13.500 3.500" fill="none" stroke="#5b5048" stroke-width="4"/><path d="M3.500 7.500 7 11 13.500 3.500" fill="none" stroke="#fff" stroke-width="2.400"/>',
  trash: '<path d="M3.300 2.800H12.700V4.300H3.300ZM6 1.500H10V3H6ZM3.300 5H12.700V15H3.300Z" fill="#dc3030"/><path d="M5.200 6.500V13.500M7.900 6.500V13.500M10.600 6.500V13.500" stroke="#f5c5c0" stroke-width="1.200"/>',
  cancel: '<g fill="none" stroke="#dc3030" stroke-width="2"><circle cx="8" cy="8" r="6.300"/><path d="M12.300 3.700 3.700 12.300"/></g>',
  ok: '<path d="M.5 9 3.500 6.500 6.500 9 13 2 15.500 4.500 7 14Z" fill="#879c08"/>'
};
icons.links = `<g transform="translate(-1 0)">${icons.link}</g><path d="M12 3 16 6 12 9.500" fill="none" stroke="#4f9413" stroke-width="1.300"/>`;

const draw = (el, name) => { el.innerHTML = `<svg viewBox="0 0 16 16">${icons[name]}</svg>`; };
const spacers = { '|': 'gap', '/': 'sep', '-': 'dash', '.': 'dash' };

document.querySelectorAll('.cells').forEach(row => {
  row.dataset.cells.split(' ').forEach(token => {
    const el = document.createElement('i');
    if (spacers[token]) el.className = spacers[token];
    else {
      el.className = token.endsWith('!') ? 'cell16 on' : 'cell16';
      draw(el, token.replace('!', ''));
    }
    row.append(el);
  });
});
document.querySelectorAll('[data-icon]').forEach(el => draw(el, el.dataset.icon));

// Ground grid: unit cell projected through a four-point perspective mapping.
const corner = [[1148, 386.7], [1278.3, 424.3], [1314.3, 258.3], [1225.7, 242.3]];
const [[x0, y0], [x1, y1], [x2, y2], [x3, y3]] = corner;
const dx1 = x1 - x2, dx2 = x3 - x2, sx = x0 - x1 + x2 - x3;
const dy1 = y1 - y2, dy2 = y3 - y2, sy = y0 - y1 + y2 - y3;
const det = dx1 * dy2 - dx2 * dy1;
const g = (sx * dy2 - dx2 * sy) / det, h = (dx1 * sy - sx * dy1) / det;
const project = (u, v) => {
  const w = g * u + h * v + 1;
  return w < 0.04 ? null : [((x1 - x0 + g * x1) * u + (x3 - x0 + h * x3) * v + x0) / w, ((y1 - y0 + g * y1) * u + (y3 - y0 + h * y3) * v + y0) / w];
};
const stroke = (fixed, from, to, alongV) => {
  let d = '', pen = 'M';
  for (let k = 0; k <= 60; k++) {
    const s = from + (to - from) * k / 60;
    const p = alongV ? project(fixed, s) : project(s, fixed);
    if (!p) { pen = 'M'; continue; }
    d += pen + p[0].toFixed(1) + ' ' + p[1].toFixed(1);
    pen = 'L';
  }
  return d;
};
let minor = '', major = '';
for (let n = -80; n <= 30; n++) {
  const d = stroke(n / 10, -1.75, 8, true);
  if (n % 10) minor += d; else major += d;
}
for (let n = -70; n <= 150; n++) {
  const d = stroke(n / 40, -8, 3, false);
  if (n % 10) minor += d; else major += d;
}
document.getElementById('scene').innerHTML =
  `<path d="${minor}" fill="none" stroke="#2c3048" stroke-opacity=".26" stroke-width=".8"/>
   <path d="${major}" fill="none" stroke="#2a2840" stroke-opacity=".62"/>
   <path d="M1120 122H1187L1146 156 1120 176Z" fill="#535a5b"/><path d="M1187 122 1146 156M1151 122 1146 125" stroke="#0b0b0b" fill="none"/>
   <g fill="none" stroke-width="1.800"><path d="M1333 632V618" stroke="#1c1c8e"/><path d="M1333 632 1340 627" stroke="#1e8a34"/><path d="M1333 632 1351 638" stroke="#8e1c1c"/></g>
   <path d="M1333 615 1331 621H1335Z" fill="#1c1c8e"/>
   <text x="1335" y="615" font-size="9.500" fill="#111">Z</text><text x="1343.500" y="625.500" font-size="9.500" fill="#111">Y</text>`;
```
